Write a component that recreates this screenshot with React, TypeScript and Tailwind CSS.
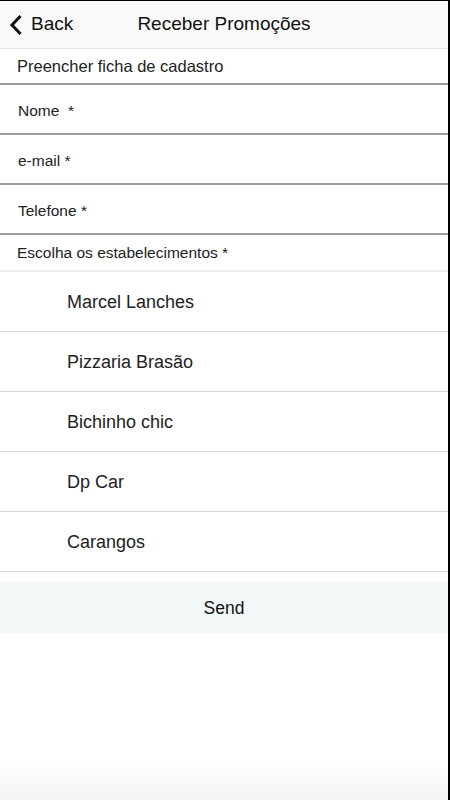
import React from "react";

const items = ["Marcel Lanches", "Pizzaria Brasão", "Bichinho chic", "Dp Car", "Carangos"];

export default function App() {
  return (
    <div
      className="relative w-[450px] h-[800px] overflow-hidden bg-white border-t border-t-black border-r-2 border-r-black text-[#222]"
      style={{ fontFamily: '"Liberation Sans", Arial, sans-serif' }}
    >
      <div className="h-[48px] bg-[#f9f9f9] border-b border-b-[#e6e0ea] relative flex items-center">
        <div className="flex items-center pl-[9px] gap-[9px] text-[19px] text-[#111]">
          <svg width="13" height="22" viewBox="0 0 13 22" fill="none">
            <path d="M11.5 2 L3 11 L11.5 20" stroke="#111" strokeWidth="3" strokeLinecap="butt" strokeLinejoin="miter" />
          </svg>
          <span>Back</span>
        </div>
        <div className="absolute left-0 right-0 top-0 h-full flex items-center justify-center text-[19px] text-[#111] pointer-events-none">
          Receber Promoções
        </div>
      </div>
      <div className="h-[36px] flex items-center pl-[17px] text-[16.5px] text-[#222] border-b-2 border-b-[#9d9d9d]">
        Preencher ficha de cadastro
      </div>
      <div className="h-[50px] flex items-center pl-[18px] pt-[3px] text-[15.5px] text-[#222] border-b-2 border-b-[#9d9d9d]">
        Nome&nbsp;&nbsp;*
      </div>
      <div className="h-[50px] flex items-center pl-[18px] pt-[3px] text-[15.5px] text-[#222] border-b-2 border-b-[#9d9d9d]">
        e-mail *
      </div>
      <div className="h-[50px] flex items-center pl-[18px] pt-[3px] text-[15.5px] text-[#222] border-b-2 border-b-[#9d9d9d]">
        Telefone *
      </div>
      <div className="h-[37px] flex items-center pl-[17px] pt-[1px] text-[15.5px] text-[#222] border-b-2 border-b-[#ececec]">
        Escolha os estabelecimentos *
      </div>
      {items.map((name) => (
        <div
          key={name}
          className="h-[60px] flex items-center pl-[67px] pt-[1px] text-[18px] text-[#222] border-b border-b-[#d9d9d9]"
        >
          {name}
        </div>
      ))}
      <div className="mt-[10px] h-[51px] bg-[#f3f9f9] flex items-center justify-center pt-[1px] text-[17.5px] text-[#111]">
        Send
      </div>
      <div className="absolute left-0 right-0 bottom-0 h-[36px] bg-gradient-to-b from-white to-[#f4f4f4]" />
    </div>
  );
}
